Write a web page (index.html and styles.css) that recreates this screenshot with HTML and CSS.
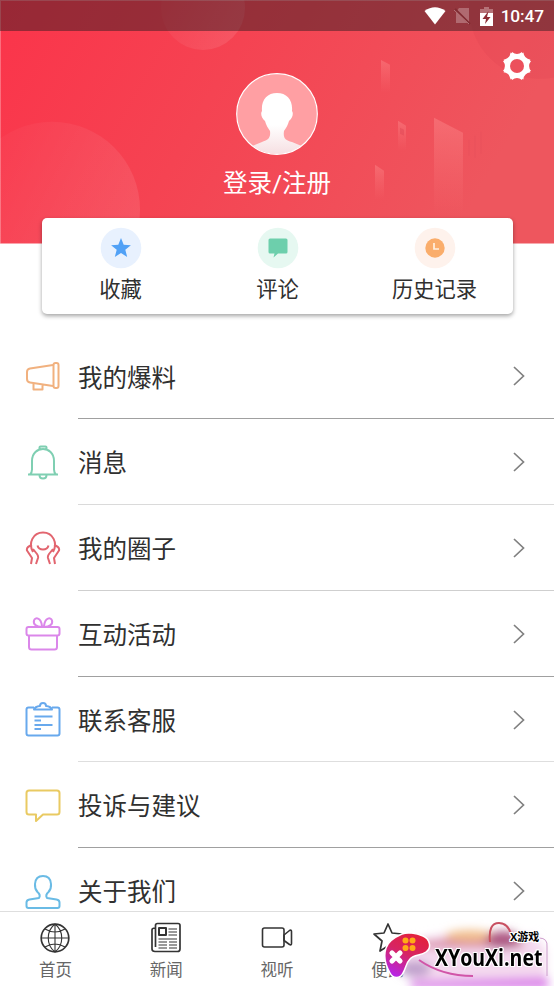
FILE: index.html
```html
<!DOCTYPE html>
<html lang="zh-CN">
<head>
<meta charset="utf-8">
<title>我的</title>
<link rel="stylesheet" href="styles.css">
</head>
<body>
<div class="app">
  <header class="hero">
    <svg class="hero-art" viewBox="0 0 554 244" preserveAspectRatio="none">
      <defs>
        <linearGradient id="bg" x1="0" y1="0" x2="1" y2=".25"><stop offset="0" stop-color="#fb344a"/><stop offset=".45" stop-color="#f54352"/><stop offset="1" stop-color="#ee565e"/></linearGradient>
        <linearGradient id="orb" x1="0" y1="0.1" x2="1" y2=".6"><stop offset="0" stop-color="#fff" stop-opacity=".01"/><stop offset="1" stop-color="#fff" stop-opacity=".1"/></linearGradient>
        <linearGradient id="tower" x1="0" y1="0" x2="0" y2="1"><stop offset="0" stop-color="#ff9a9a" stop-opacity=".36"/><stop offset="1" stop-color="#ff8a8a" stop-opacity="0"/></linearGradient>
      </defs>
      <rect width="554" height="244" fill="url(#bg)"/>
      <circle cx="52" cy="210" r="88" fill="url(#orb)"/>
      <circle cx="203" cy="8" r="42" fill="url(#orb)"/>
      <circle cx="540" cy="8" r="71" fill="#d83f50" opacity=".18"/>
      <g fill="url(#tower)">
        <path d="M381 60l9 5v28h-9z"/>
        <path d="M398 121l8 5v25h-8z"/>
        <path d="M375 165l9 6v29h-9z"/>
        <path d="M434 118l29 15v82h-29z"/>
      </g>
      <path d="M469 140v16M475 136v22M481 132v22" fill="none" stroke="#d64554" stroke-width="2" opacity=".13"/>
      <path d="M400 128l4 2v6l-4-2z" fill="#df4755" opacity=".5"/>
      <path d="M0 .5h554M.5 0v244" stroke="#fff" opacity=".28"/>
    </svg>
    <div class="statusbar">
      <svg class="wifi" viewBox="0 0 22 18"><path d="M.5 4Q11-3.5 21.500 4L11 17.500z" fill="#fff"/></svg>
      <svg class="sim" viewBox="0 0 17 18"><path d="M5 1h10v15H2V5z" fill="#b06a70"/><path d="M1 2l15 15" stroke="#812b32" stroke-width="2"/><path d="M0 3l15 14" stroke="#b57277"/></svg>
      <svg class="battery" viewBox="0 0 13 19"><path d="M4 0h5v2h4v5H0V2h4z" fill="#b57277"/><path d="M0 6h13v13H0z" fill="#fff"/><path d="M8.500 4L2.500 12h3.500l-1 5 5.500-7H7z" fill="#8d2d35"/></svg>
      <span class="clock">10:47</span>
    </div>
    <div class="toolbar">
      <svg class="gear" viewBox="0 0 28 28"><g fill="#fff"><circle cx="14" cy="14" r="11.400"/><path id="tooth" d="M8 4L9 0Q14 3.800 19 0L20 4z"/><use href="#tooth" transform="rotate(45 14 14)"/><use href="#tooth" transform="rotate(90 14 14)"/><use href="#tooth" transform="rotate(135 14 14)"/><use href="#tooth" transform="rotate(180 14 14)"/><use href="#tooth" transform="rotate(225 14 14)"/><use href="#tooth" transform="rotate(270 14 14)"/><use href="#tooth" transform="rotate(315 14 14)"/></g><circle cx="14" cy="14" r="7" fill="#ec505c"/></svg>
    </div>
    <div class="profile">
      <svg class="avatar" viewBox="0 0 82 82">
        <defs><clipPath id="face"><circle cx="41" cy="41" r="40"/></clipPath><linearGradient id="bust" x1="0" y1="0" x2="0" y2="1"><stop offset=".5" stop-color="#fff"/><stop offset="1" stop-color="#f5dcdf"/></linearGradient></defs>
        <circle cx="41" cy="41" r="40" fill="#ff9fa3"/>
        <path clip-path="url(#face)" d="M41 20C31 20 25 27 26 38c-2 3 0 8 3 10 1 4 3 7 5 10 1 8-3 9-8 11L14 74v10h54V74l-12-5c-7-2-9-4-8-11 2-3 4-6 5-10 3-2 5-7 3-10 1-11-5-18-15-18z" fill="url(#bust)"/>
        <circle cx="41" cy="41" r="40.300" fill="none" stroke="#fff" stroke-width="1.200"/>
      </svg>
      <div class="login">登录/注册</div>
    </div>
  </header>

  <section class="card">
    <div class="quick"><svg viewBox="0 0 42 42"><circle cx="21" cy="21" r="20.300" fill="#e8f1fe"/><path d="M21 11l2.700 6.800 7.200.4-5.600 4.600 1.900 7.200-6.200-4-6.200 4 1.900-7.200-5.600-4.600 7.200-.4z" fill="#51a1f6"/></svg><span>收藏</span></div>
    <div class="quick"><svg viewBox="0 0 42 42"><circle cx="21" cy="21" r="20.300" fill="#e6f8f1"/><path d="M13 11.500h16q1.500 0 1.500 1.500v12q0 1.500-1.500 1.500H21L16.500 30.500l1-4H13q-1.500 0-1.500-1.500V13q0-1.500 1.500-1.500z" fill="#6dcfac"/></svg><span>评论</span></div>
    <div class="quick"><svg viewBox="0 0 42 42"><circle cx="21" cy="21" r="20.300" fill="#fef2ec"/><circle cx="21" cy="21" r="9.700" fill="#faad6b"/><path d="M20 16v6h5" fill="none" stroke="#fff0df" stroke-width="1.700"/></svg><span>历史记录</span></div>
  </section>

  <main class="menu">
    <a class="row"><svg class="icon orange" viewBox="0 0 36 36"><path d="M28 6L5 9.500Q2 10 2 13v7q0 3 3 3.500L28 27M8.500 24v6.500h9V25"/><rect x="28.500" y="4" width="5" height="25" rx="2"/></svg><span class="label line-dark">我的爆料</span><svg class="arrow" viewBox="0 0 12 20"><path d="M1 1l9.500 9L1 19"/></svg></a>
    <a class="row"><svg class="icon green" viewBox="0 0 36 36"><path d="M3 29.500h30M5 29.500q2-2 2-5V16C7 0 29 0 29 16v8.500q0 3 2 5M14.500 5V2.500q0-1 1-1h5q1 0 1 1V5M14.500 30q0 3.500 3.500 3.500t3.500-3.500"/></svg><span class="label line-light">消息</span><svg class="arrow" viewBox="0 0 12 20"><path d="M1 1l9.500 9L1 19"/></svg></a>
    <a class="row"><svg class="icon red" viewBox="0 0 36 36"><path d="M8 22C3 13 8 2.500 18 2.500S33 13 28 22M12.500 15.500q1 4 5.500 4t5.500-4M7 15Q1 17 2 20.500L7 28l-1 6M11 34l2-6q.5-2-1-4l-4-5M29 15q6 2 5 5.500L29 28l1 6M25 34l-2-6q-.5-2 1-4l4-5"/></svg><span class="label line-mid">我的圈子</span><svg class="arrow" viewBox="0 0 12 20"><path d="M1 1l9.500 9L1 19"/></svg></a>
    <a class="row"><svg class="icon purple" viewBox="0 0 36 36"><rect x="1.500" y="11" width="33" height="8.500" rx="2"/><path d="M4 19.500V31q0 2.500 2.500 2.500h23q2.500 0 2.500-2.500V19.500M17 11C11 11 8 8 9 4.500S16 1 17 10M19 11c6 0 9-3 8-6.500S20 1 19 10"/></svg><span class="label line-dark">互动活动</span><svg class="arrow" viewBox="0 0 12 20"><path d="M1 1l9.500 9L1 19"/></svg></a>
    <a class="row"><svg class="icon blue" viewBox="0 0 36 36"><path d="M9 5.500H3.500q-2 0-2 2v24q0 2 2 2h29q2 0 2-2v-24q0-2-2-2H27M9 7.500q1-3 6-3.500 0-3 3-3t3 3q5 .5 6 3.500zM9.500 14.500h18M9.500 18.500H16M9.500 23h18M9.500 27H16"/></svg><span class="label line-pale">联系客服</span><svg class="arrow" viewBox="0 0 12 20"><path d="M1 1l9.500 9L1 19"/></svg></a>
    <a class="row"><svg class="icon yellow" viewBox="0 0 36 36"><path d="M4 2.500h28q2.500 0 2.500 2.500v19q0 2.500-2.500 2.500H18L11 33v-6.500H4q-2.500 0-2.500-2.500V5q0-2.500 2.500-2.500z"/></svg><span class="label line-dark">投诉与建议</span><svg class="arrow" viewBox="0 0 12 20"><path d="M1 1l9.500 9L1 19"/></svg></a>
    <a class="row"><svg class="icon sky" viewBox="0 0 36 36"><path d="M14 24q2-3-1.500-6Q9.500 14.500 10 10q.5-8 8-8t8 8q.5 4.500-2.500 8-3.500 3-1.500 6l9.500 1.500q3 .5 3 3V32q0 2-2 2h-29q-2 0-2-2v-3.500q0-2.500 3-3z"/></svg><span class="label">关于我们</span><svg class="arrow" viewBox="0 0 12 20"><path d="M1 1l9.500 9L1 19"/></svg></a>
  </main>

  <nav class="tabs">
    <a class="tab"><svg viewBox="0 0 32 32"><circle cx="16" cy="16" r="13.800" stroke-width="1.700"/><path stroke-width="1.100" d="M16 2v28M2 16h28M16 2C7 9 7 23 16 30M16 2c9 7 9 21 0 28M6 7q10 6 20 0M6 25q10-6 20 0"/></svg><span>首页</span></a>
    <a class="tab"><svg viewBox="0 0 32 32"><path stroke-width="1.700" d="M5.500 25V3.500q0-2 2-2h20.500q2 0 2 2V27q0 2.500-2.500 2.500H5Q2 29.500 2 27V8q0-2 3-2"/><rect x="9" y="6" width="7" height="7" stroke-width="2"/><path stroke-width="1.200" d="M18.500 7H27M18.500 10H27M18.500 13H27M8.500 17H27M8.500 20h8.500M19 20h8M8.500 23h8.500M19 23h8M8.500 26h8.500M19 26h8"/></svg><span>新闻</span></a>
    <a class="tab"><svg viewBox="0 0 32 32"><rect x="1.500" y="6" width="21.500" height="19" rx="2" stroke-width="1.600"/><path stroke-width="1.600" d="M23 13l5.500-4.500q2-1 2 1v12q0 2-2 1L23 18.500z"/></svg><span>视听</span></a>
    <a class="tab"><svg viewBox="0 0 32 32"><path stroke-width="1.700" d="M16 2l4 9 10 1-8 7 3 10-9-5-8 5 2-10-8-7 10-1z"/></svg><span>便民</span></a>
    <a class="tab"></a>
    <div class="watermark">
      <svg class="glow" viewBox="0 0 180 74">
        <defs><filter id="soft" x="-30%" y="-60%" width="160%" height="220%"><feGaussianBlur stdDeviation="5"/></filter></defs>
        <g filter="url(#soft)">
          <path d="M32 32Q65 18 100 24t58-2l14 15v36H50L28 60z" fill="#f4d9ef"/>
          <path d="M36 31l42-4 46-2 25 5v6H48z" fill="#d889a2"/>
          <ellipse cx="96" cy="24" rx="25" ry="6" fill="#f1bd8c"/>
          <ellipse cx="129" cy="28" rx="17" ry="9" fill="#ad5682"/>
          <ellipse cx="41" cy="57" rx="16" ry="8" fill="#bfa0cc"/>
          <path d="M36 69l138-4v12H38z" fill="#dc85ea"/>
        </g>
      </svg>
      <svg class="swoosh" viewBox="0 0 180 66"><path d="M45 40Q68 56 99 56" fill="none" stroke="#d155a8" stroke-width="2"/><path d="M165 18q9 0 8 9v29" fill="none" stroke="#cc9dcc" stroke-width="1"/><path d="M116 22Q114 3 125 3t13 17" fill="none" stroke="#c85061" stroke-width="2"/></svg>
      <svg class="pad" viewBox="0 0 49 49">
        <defs><linearGradient id="padfill" x1=".75" y1="0" x2=".25" y2="1"><stop offset="0" stop-color="#e32239"/><stop offset=".48" stop-color="#d72463"/><stop offset="1" stop-color="#b526ec"/></linearGradient></defs>
        <path d="M19 3C24 1 33 2 40 5c7 3 9 12 3 16-5 4-12 2-16 7-4 4-4 9-7 14-3 6-10 6-13 0C3 35 0 26 3 17 5 10 12 6 19 3z" fill="url(#padfill)" stroke="#fff" stroke-width="1.500"/>
        <g fill="#ffac16"><circle cx="22.500" cy="9.500" r="3"/><circle cx="29.500" cy="9.500" r="3"/><circle cx="22.500" cy="17" r="3"/><circle cx="29.500" cy="17" r="3"/></g>
        <path d="M9 22l8 8M17 22l-8 8" stroke="#fff" stroke-width="5.200" stroke-linecap="round"/>
      </svg>
      <div class="brand-small">X游戏</div>
      <div class="brand">XYouXi.net</div>
    </div>
  </nav>
</div>
</body>
</html>
```
FILE: styles.css
```css
* { box-sizing: border-box; }
body { margin: 0; background: #fff; }
.app {
  width: 554px;
  height: 986px;
  display: flex;
  flex-direction: column;
  overflow: hidden;
  color: #303030;
  font-family: Roboto, "Noto Sans CJK SC", sans-serif;
}
svg { display: block; flex: none; }

.hero { position: relative; flex: 0 0 243.5px; color: #fff; }
.hero-art { position: absolute; inset: 0; width: 100%; height: 100%; }
.statusbar {
  position: relative;
  height: 31px;
  padding: 1px 10px 0 0;
  display: flex;
  align-items: center;
  justify-content: flex-end;
  background: rgba(47, 27, 31, .48);
}
.wifi { width: 22px; height: 18px; margin-right: 8px; }
.sim { width: 17px; height: 18px; margin-right: 9px; }
.battery { width: 13px; height: 19px; margin-right: 8px; }
.clock { font-size: 17.300px; line-height: 20px; font-weight: 500; letter-spacing: -.1px; }
.toolbar { position: relative; display: flex; justify-content: flex-end; height: 42px; padding: 21px 23px 0 0; }
.gear { width: 28px; height: 28px; }
.profile { position: relative; display: flex; flex-direction: column; align-items: center; }
.avatar { width: 82px; height: 82px; margin-top: -.5px; }
.login { margin-top: 11px; font-size: 24.500px; line-height: 36px; }

.card {
  position: relative;
  flex: none;
  width: 471px;
  height: 96px;
  margin: -25.500px 0 0 42px;
  padding-top: 9px;
  display: grid;
  grid-template-columns: repeat(3, 1fr);
  background: #fff;
  border-radius: 5px;
  box-shadow: 0 2px 4px rgba(0, 0, 0, .36);
}
.quick { display: flex; flex-direction: column; align-items: center; font-size: 21.300px; line-height: 30px; }
.quick svg { width: 42px; height: 42px; margin-bottom: 6px; }

.menu { flex: 1; min-height: 0; margin-top: 19.500px; overflow: hidden; }
.row { position: relative; display: flex; align-items: center; height: 85.800px; padding-left: 25px; }
.icon { width: 36px; height: 36px; margin: 1px 17px 0 0; fill: none; stroke-width: 2; stroke-linejoin: round; }
.label {
  flex: 1;
  align-self: stretch;
  padding-top: 3px;
  font-size: 24.500px;
  line-height: 84px;
  height: 85.800px;
  border-bottom: 1px solid transparent;
}
.line-dark { border-color: #a0a0a0; }
.line-mid { border-color: #cfcfcf; }
.line-light { border-color: #dadada; }
.line-pale { border-color: #dedede; }
.arrow { position: absolute; right: 29px; width: 12px; height: 20px; fill: none; stroke: #808080; stroke-width: 1.700; }
.orange { stroke: #f1b17f; }
.green { stroke: #7fcfb2; }
.red { stroke: #e2656f; }
.purple { stroke: #db87ea; }
.blue { stroke: #68a9ed; }
.yellow { stroke: #e9ca62; }
.sky { stroke: #6abbe5; }

.tabs {
  position: relative;
  flex: 0 0 75px;
  display: grid;
  grid-template-columns: repeat(5, 1fr);
  background: #fff;
  border-top: 1px solid #dedede;
}
.tab { display: flex; flex-direction: column; align-items: center; padding-top: 10px; font-size: 16.500px; line-height: 24px; color: #666; }
.tab svg { width: 32px; height: 32px; margin-bottom: 5px; fill: none; stroke: #343434; stroke-linejoin: round; }
.watermark { position: absolute; right: 0; top: 0; width: 180px; height: 74px; }
.glow { position: absolute; inset: 0; width: 180px; height: 74px; }
.swoosh { position: absolute; left: 0; top: 8px; width: 180px; height: 66px; }
.pad { position: absolute; left: 9px; top: 19px; width: 49px; height: 49px; }
.brand, .brand-small {
  position: absolute;
  color: #000;
  font-family: "Open Sans", "Noto Sans CJK SC", sans-serif;
  font-weight: 700;
  white-space: nowrap;
  text-shadow: 1px 0 #fff, -1px 0 #fff, 0 1px #fff, 0 -1px #fff, 1px 1px #fff, -1px -1px #fff, 1px -1px #fff, -1px 1px #fff;
}
.brand { left: 61px; top: 32px; font-size: 23.500px; line-height: 27px; transform: scaleX(.83); transform-origin: left; }
.brand-small { left: 136px; top: 17px; font-size: 11px; line-height: 16px; }
```
